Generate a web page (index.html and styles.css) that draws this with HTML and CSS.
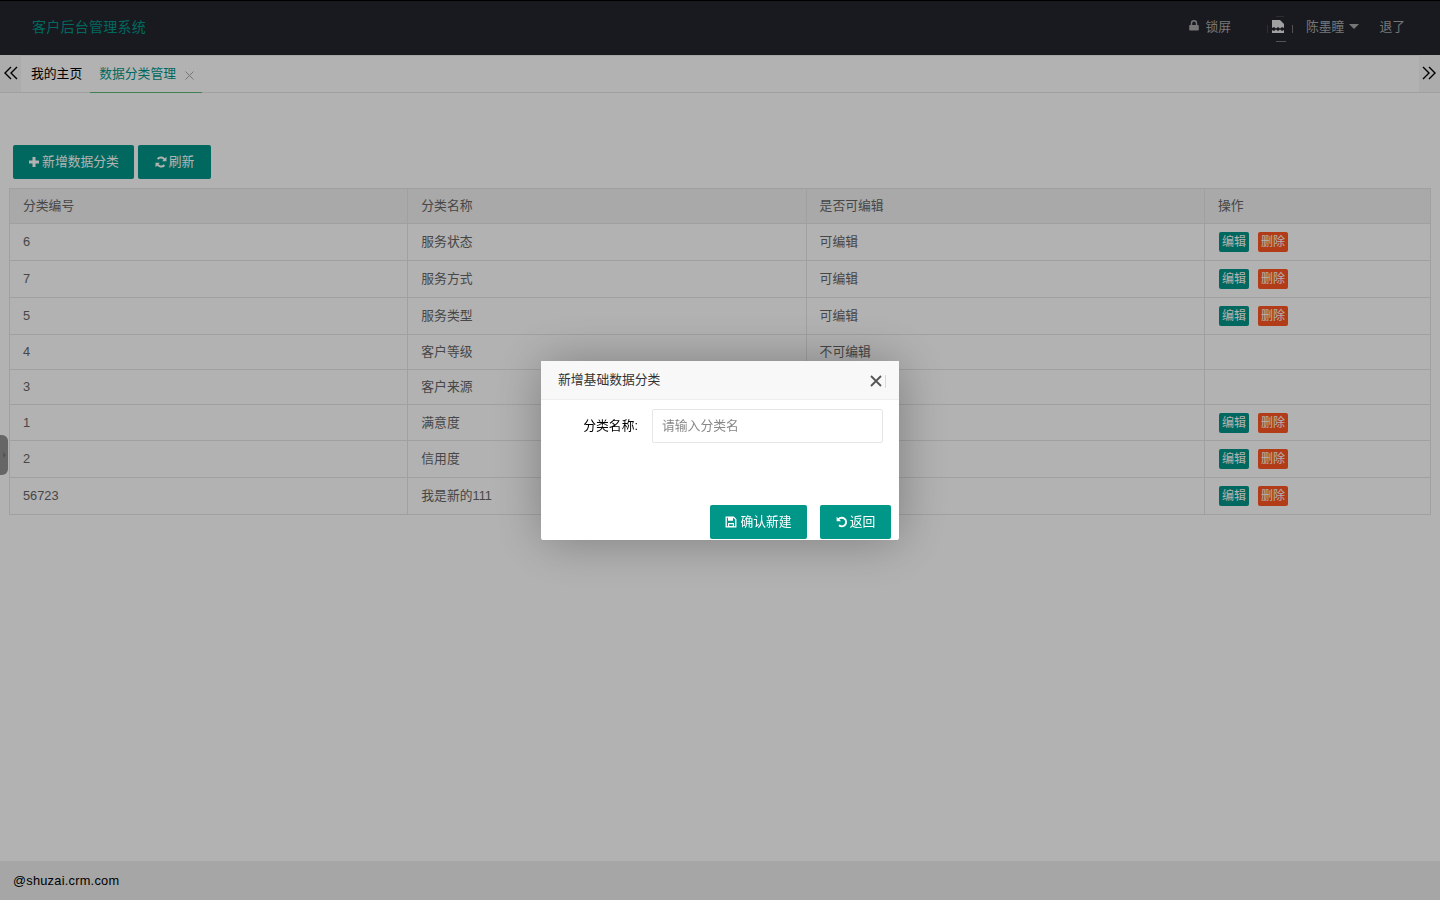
FILE: index.html
```html
<!DOCTYPE html>
<html lang="zh-CN">
<head>
    <meta charset="UTF-8">
    <meta name="viewport" content="width=device-width, initial-scale=1.0">
    <title>客户后台管理系统</title>
    <link rel="stylesheet" href="styles.css">
</head>
<body>
    <div class="page">
        <header class="header">
            <div class="logo">客户后台管理系统</div>
            <div class="nav">
                <span class="nav-item lock">
                    <svg class="ico-lock" viewBox="0 0 10 11"><path fill="currentColor" d="M1 5h.8V3.200a3.200 3.200 0 0 1 6.400 0V5H9a.8.8 0 0 1 .8.8v4a.8.8 0 0 1-.8.8H1a.8.8 0 0 1-.8-.8v-4A.8.8 0 0 1 1 5zm2.200 0h3.600V3.200a1.800 1.800 0 0 0-3.600 0z"/></svg>
                    锁屏
                </span>
                <span class="avatar">
                    <svg viewBox="0 0 26 26" width="26" height="26">
                        <path fill="none" stroke="#444" d="M.5 9v8M9 .5h8"/>
                        <path fill="none" stroke="#777" d="M25.500 9v8M9 25.500h10"/>
                        <path fill="#e6e6e6" d="M5 4h8l4 4v4l-2-1-2 1.500-2-1.500-2 1.500-2-1.500-2 1z"/>
                        <path fill="#e6e6e6" d="M5 14l2 1 2-1.500 2 1.500 2-1.500 2 1.500 2-1V17H5z"/>
                    </svg>
                </span>
                <span class="nav-item user">陈墨瞳<i class="caret"></i></span>
                <span class="nav-item logout">退了</span>
            </div>
        </header>

        <div class="tabs">
            <span class="tab-arrow">
                <svg viewBox="0 0 16 14" width="16" height="14"><path fill="none" stroke="#000" stroke-width="1.400" d="M8 1 2 7l6 6M14 1 8 7l6 6"/></svg>
            </span>
            <div class="tab-list">
                <span class="tab">我的主页</span>
                <span class="tab tab-active">数据分类管理<svg class="tab-close" viewBox="0 0 9 9"><path fill="none" stroke="#aaa" d="M.5.5l8 8M8.500.5l-8 8"/></svg></span>
            </div>
            <span class="tab-arrow tab-arrow-right">
                <svg viewBox="0 0 16 14" width="16" height="14"><path fill="none" stroke="#000" stroke-width="1.400" d="M2 1l6 6-6 6M8 1l6 6-6 6"/></svg>
            </span>
        </div>

        <main class="content">
            <div class="toolbar">
                <button class="btn">
                    <svg class="ico" viewBox="0 0 12 12"><path fill="currentColor" d="M4.500 1h3v3.500H11v3H7.500V11h-3V7.500H1v-3h3.500z"/></svg>新增数据分类
                </button>
                <button class="btn btn-small">
                    <svg class="ico" viewBox="0 0 12 12"><path fill="none" stroke="currentColor" stroke-width="2" d="M10 4.300A4.300 4.300 0 0 0 2.600 3M2 7.700A4.300 4.300 0 0 0 9.400 9"/><path fill="currentColor" d="M11.500 .8v4.400H7.100zM.5 11.200V6.800h4.400z"/></svg>刷新
                </button>
            </div>

            <table class="grid">
                <colgroup>
                    <col class="col-main"><col class="col-main"><col class="col-main"><col>
                </colgroup>
                <thead>
                    <tr><th>分类编号</th><th>分类名称</th><th>是否可编辑</th><th>操作</th></tr>
                </thead>
                <tbody>
                    <tr><td class="num">6</td><td>服务状态</td><td>可编辑</td><td class="ops"><span class="tag">编辑</span><span class="tag tag-red">删除</span></td></tr>
                    <tr><td class="num">7</td><td>服务方式</td><td>可编辑</td><td class="ops"><span class="tag">编辑</span><span class="tag tag-red">删除</span></td></tr>
                    <tr><td class="num">5</td><td>服务类型</td><td>可编辑</td><td class="ops"><span class="tag">编辑</span><span class="tag tag-red">删除</span></td></tr>
                    <tr class="plain"><td class="num">4</td><td>客户等级</td><td>不可编辑</td><td></td></tr>
                    <tr class="plain"><td class="num">3</td><td>客户来源</td><td>不可编辑</td><td></td></tr>
                    <tr class="mid"><td class="num">1</td><td>满意度</td><td>可编辑</td><td class="ops"><span class="tag">编辑</span><span class="tag tag-red">删除</span></td></tr>
                    <tr><td class="num">2</td><td>信用度</td><td>可编辑</td><td class="ops"><span class="tag">编辑</span><span class="tag tag-red">删除</span></td></tr>
                    <tr><td class="num">56723</td><td>我是新的111</td><td>可编辑</td><td class="ops"><span class="tag">编辑</span><span class="tag tag-red">删除</span></td></tr>
                </tbody>
            </table>
        </main>

        <footer class="footer">@shuzai.crm.com</footer>
    </div>

    <div class="side-handle"><i></i></div>
    <div class="shade"></div>

    <div class="modal">
        <div class="modal-title">
            新增基础数据分类
            <svg class="modal-close" viewBox="0 0 12 12"><path fill="none" stroke="#555" stroke-width="1.800" d="M1 1l10 10M11 1 1 11"/></svg>
        </div>
        <div class="modal-body">
            <label class="field-label" for="name">分类名称:</label>
            <input class="field-input" id="name" type="text" placeholder="请输入分类名">
        </div>
        <div class="modal-foot">
            <button class="btn btn-modal">
                <svg class="ico ico-save" viewBox="0 0 12 12"><path fill="none" stroke="currentColor" stroke-width="1.300" d="M1.200 1.200h7.400l2.200 2.200v7.400H1.200z"/><path fill="currentColor" d="M3 1h5v3.800H3zM3 7h6v4H3z"/><path fill="#009688" d="M4.200 8.200h3.600V10H4.200z"/></svg>确认新建
            </button>
            <button class="btn btn-modal btn-back">
                <svg class="ico" viewBox="0 0 12 12"><path fill="none" stroke="currentColor" stroke-width="1.800" d="M2.500 3.300A4.300 4.300 0 1 1 3 9.300"/><path fill="currentColor" d="M.6.800v4.500h4.500z"/></svg>返回
            </button>
        </div>
    </div>
</body>
</html>
```

FILE: styles.css
```css
* {
    box-sizing: border-box;
}
body {
    margin: 0;
    font-family: "Liberation Sans", "Noto Sans CJK SC", sans-serif;
    font-size: 12.8px;
    color: #666;
    background: #fff;
}
.page {
    height: 900px;
    display: flex;
    flex-direction: column;
}
i {
    font-style: normal;
}

/* header */
.header {
    height: 55px;
    flex: none;
    display: flex;
    justify-content: space-between;
    align-items: center;
    background: #23262e;
    border-top: 1px solid #000;
    padding: 0 35px 5px 32px;
}
.logo {
    color: #009688;
    font-size: 14px;
    letter-spacing: .25px;
}
.nav {
    display: flex;
    align-items: center;
    color: #aaa;
}
.ico-lock {
    width: 10px;
    height: 11px;
    margin-right: 6px;
}
.lock {
    display: flex;
    align-items: center;
}
.avatar {
    width: 26px;
    height: 26px;
    margin: 6px 13px 0 36px;
    display: flex;
}
.caret {
    display: inline-block;
    border: 5px solid transparent;
    border-top-color: #aaa;
    border-bottom: 0;
    margin-left: 5px;
    vertical-align: 2px;
}
.logout {
    margin-left: 20px;
}

/* tabs */
.tabs {
    height: 38px;
    flex: none;
    display: flex;
    border-bottom: 1px solid #e6e6e6;
}
.tab-arrow {
    width: 21px;
    height: 37px;
    background: #f6f6f6;
    display: flex;
    align-items: center;
    justify-content: center;
    padding-bottom: 2px;
}
.tab-arrow-right {
    padding-right: 2px;
}
.tab-list {
    flex: 1;
    display: flex;
    border-top: 1px solid #eee;
}
.tab {
    padding: 0 8px 0 10px;
    line-height: 36px;
    color: #000;
}
.tab-active {
    display: flex;
    align-items: center;
    color: #009688;
    width: 112px;
    padding: 0 0 0 9px;
    border-bottom: 1px solid #5fb878;
    height: 37px;
}
.tab-close {
    width: 9px;
    height: 9px;
    margin: 2px 0 0 9px;
}

/* main */
.content {
    flex: 1;
    padding: 52px 9px 0 9px;
}
.toolbar {
    display: flex;
    gap: 4px;
    padding-left: 4px;
    margin-bottom: 9px;
}
.btn {
    height: 34px;
    width: 121px;
    border: 0;
    border-radius: 2px;
    background: #009688;
    color: #fff;
    font: inherit;
    padding: 0 0 3px;
    display: flex;
    align-items: center;
    justify-content: center;
}
.btn-small {
    width: 73px;
}
.ico {
    width: 12px;
    height: 12px;
    margin: 3px 2px 0 0;
}
.ico-save {
    margin-right: 3px;
}
.grid {
    width: 1422px;
    border-collapse: collapse;
    table-layout: fixed;
}
.col-main {
    width: 398.3px;
}
.grid th,
.grid td {
    border: 1px solid #e6e6e6;
    padding: 0 13px 3px;
    text-align: left;
    font-weight: 400;
    height: 37px;
}
.grid th {
    background: #f2f2f2;
    height: 35px;
}
.grid .num {
    padding-bottom: 1px;
}
.grid .plain td {
    height: 35px;
}
.grid .mid td {
    height: 36px;
}
.grid .ops {
    font-size: 0;
    padding: 0 13px;
}
.tag {
    display: inline-block;
    width: 30px;
    height: 20px;
    line-height: 20px;
    font-size: 12px;
    text-align: center;
    background: #009688;
    color: #fff;
    border-radius: 2px;
    margin-left: 1px;
    margin-right: 9px;
    vertical-align: middle;
}
.tag-red {
    background: #ff5722;
    margin-left: 0;
}

/* footer */
.footer {
    height: 39px;
    flex: none;
    background: #eee;
    color: #000;
    line-height: 40px;
    padding-left: 13px;
    letter-spacing: .25px;
}

/* left drawer handle */
.side-handle {
    position: fixed;
    left: 0;
    top: 435px;
    width: 8px;
    height: 40px;
    background: #929292;
    border-radius: 0 6px 6px 0;
    display: flex;
    align-items: center;
}
.side-handle i {
    border: 3px solid transparent;
    border-left-color: #777;
    border-right: 0;
    margin-left: 3px;
}

/* dialog */
.shade {
    position: fixed;
    inset: 0;
    background: rgba(0, 0, 0, .3);
}
.modal {
    position: fixed;
    left: 541px;
    top: 361px;
    width: 358px;
    height: 179px;
    background: #fff;
    box-shadow: 1px 1px 50px rgba(0, 0, 0, .3);
    border-radius: 2px;
}
.modal-title {
    height: 39px;
    line-height: 37px;
    padding-left: 17px;
    background: #f8f8f8;
    border-bottom: 1px solid #eee;
    color: #333;
    position: relative;
}
.modal-title::after {
    content: "";
    position: absolute;
    left: 344px;
    top: 14px;
    width: 1px;
    height: 13px;
    background: #cfdde6;
}
.modal-close {
    position: absolute;
    right: 17px;
    top: 14px;
    width: 12px;
    height: 12px;
}
.modal-body {
    display: flex;
    align-items: center;
    padding: 9px 16px 0 0;
}
.field-label {
    width: 111px;
    padding: 0 14px 3px 0;
    text-align: right;
    color: #000;
}
.field-input {
    flex: 1;
    height: 34px;
    border: 1px solid #e6e6e6;
    border-radius: 2px;
    padding: 0 9px 2px;
    font: inherit;
    outline: 0;
}
.field-input::placeholder {
    color: #888;
}
.modal-foot {
    position: absolute;
    right: 8px;
    bottom: 1px;
    display: flex;
    gap: 13px;
}
.btn-modal {
    width: 97px;
}
.btn-back {
    width: 71px;
}
```
